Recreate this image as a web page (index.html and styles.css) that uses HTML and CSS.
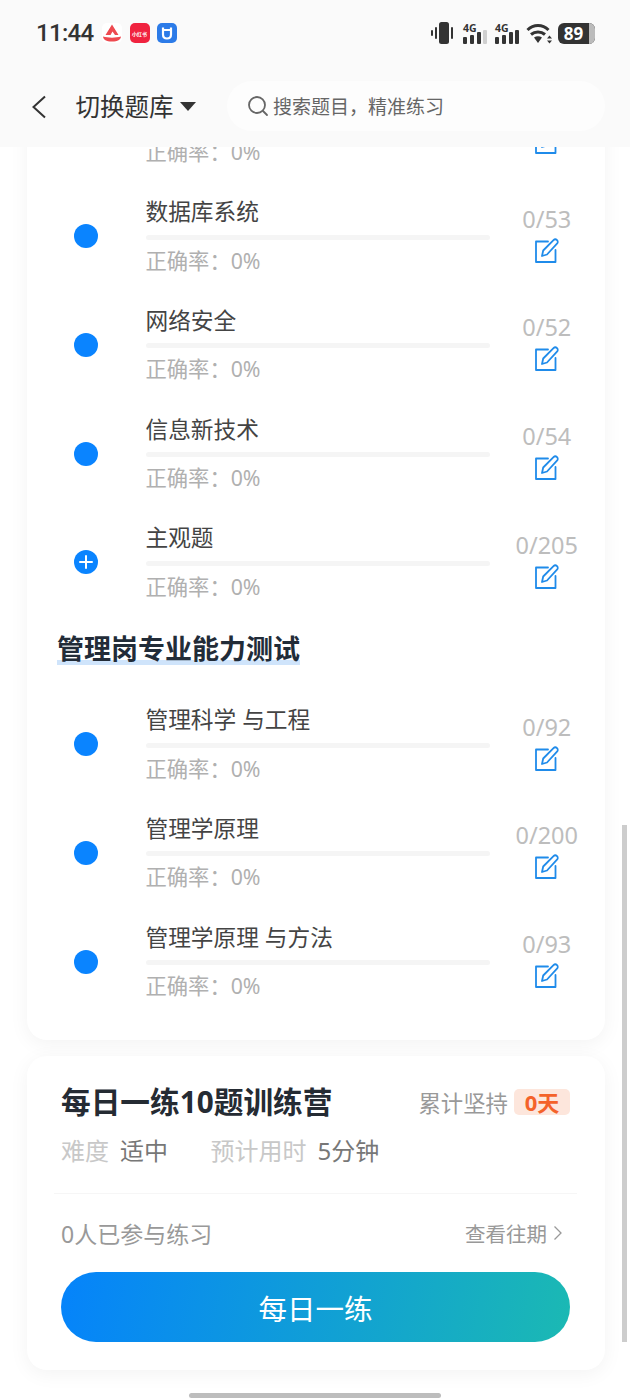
FILE: index.html
```html
<!DOCTYPE html>
<html lang="zh">

<head>
    <meta charset="utf-8">
    <title>切换题库</title>
    <link rel="stylesheet" href="styles.css">
</head>

<body>
    <svg class="defs" width="0" height="0">
        <symbol id="edit" viewBox="0 0 24 25">
            <path d="M13 3.5H1V24H20.500V12" fill="none" stroke="currentColor" stroke-width="1.800" stroke-linejoin="round" stroke-linecap="round"/>
            <path d="M7 18L8.200 12.500L18.500 2.200C19.500 1.200 21 1.200 22 2.200C23 3.200 23 4.700 22 5.700L12 16.500Z" fill="none" stroke="currentColor" stroke-width="1.800" stroke-linejoin="round"/>
        </symbol>
        <symbol id="signal" viewBox="0 0 26 24">
            <rect x="1" y="16" width="4" height="7" rx="1"/>
            <rect x="8" y="14" width="4" height="9" rx="1"/>
            <rect x="15" y="11" width="4" height="12" rx="1"/>
        </symbol>
    </svg>

    <div class="top">
        <div class="status">
            <span class="time">11:44</span>
            <span class="app app-a">
                <svg width="20" height="20" viewBox="0 0 20 20">
                    <path d="M3.500 12L10 1.500L16.500 12H13L10.500 8.500L8.500 12Z" fill="#ee4a50"/>
                    <path d="M1 13.500C6 15 14 15 19 13.500C18.500 17 16 18.500 10 18.500C4 18.500 1.500 17 1 13.500Z" fill="#ee4a50"/>
                </svg>
            </span>
            <span class="app app-red">小红书</span>
            <span class="app app-blue">
                <svg width="20" height="20" viewBox="0 0 20 20">
                    <path d="M6 4.500V11.500C6 14 7.800 15.500 10 15.500C12.200 15.500 14 14 14 11.500V4.500" fill="none" stroke="#fff" stroke-width="2.200"/>
                    <path d="M6 7H14" stroke="#fff" stroke-width="2"/>
                </svg>
            </span>
            <span class="status-right">
                <svg class="vib" width="26" height="22" viewBox="0 0 26 22">
                    <rect x="8" y="0" width="10" height="22" rx="2.500" fill="#333"/>
                    <rect x="4" y="5" width="2" height="12" rx="1" fill="#333"/>
                    <rect x="0" y="8" width="2" height="6" rx="1" fill="#333"/>
                    <rect x="20" y="5" width="2" height="12" rx="1" fill="#333"/>
                </svg>
                <span class="net">
                    <span class="net-label">4G</span>
                    <svg class="bars" width="26" height="24"><use href="#signal"/></svg>
                    <span class="bar-off"></span>
                </span>
                <span class="net">
                    <span class="net-label">4G</span>
                    <svg class="bars" width="26" height="24"><use href="#signal"/></svg>
                    <span class="bar-on"></span>
                </span>
                <svg class="wifi" width="27" height="21" viewBox="0 0 27 21">
                    <path d="M1.500 7C7.500 1 16.500 1 22.500 7" fill="none" stroke="#333" stroke-width="3"/>
                    <path d="M5 11.500C9 8 15 8 19 11.500" fill="none" stroke="#333" stroke-width="3"/>
                    <path d="M8 14.500C10.500 12.800 13.500 12.800 16 14.500L12 20Z" fill="#333"/>
                    <path d="M23.500 12.500L26 15.500H21ZM23.500 20.500L21 17.500H26Z" fill="#333"/>
                </svg>
                <span class="battery"><span class="level">89</span></span>
            </span>
        </div>
        <div class="nav">
            <svg class="back" width="16" height="24" viewBox="0 0 16 24">
                <path d="M14 1.500L2.500 12L14 22.500" fill="none" stroke="#333" stroke-width="2"/>
            </svg>
            <span class="nav-title">切换题库</span>
            <span class="caret"></span>
            <div class="search">
                <svg width="22" height="22" viewBox="0 0 22 22">
                    <circle cx="10" cy="10" r="8" fill="none" stroke="#666" stroke-width="1.800"/>
                    <path d="M16 16L20 20" stroke="#666" stroke-width="1.800" stroke-linecap="round"/>
                </svg>
                <span>搜索题目，精准练习</span>
            </div>
        </div>
    </div>

    <main class="content">
        <section class="card list">
            <div class="row">
                <span class="dot"></span>
                <div class="info">
                    <div class="name">&nbsp;</div>
                    <div class="bar"></div>
                    <div class="rate">正确率：0%</div>
                </div>
                <div class="side">
                    <div class="count">&nbsp;</div>
                    <svg class="edit"><use href="#edit"/></svg>
                </div>
            </div>
            <div class="row">
                <span class="dot"></span>
                <div class="info">
                    <div class="name">数据库系统</div>
                    <div class="bar"></div>
                    <div class="rate">正确率：0%</div>
                </div>
                <div class="side">
                    <div class="count">0/53</div>
                    <svg class="edit"><use href="#edit"/></svg>
                </div>
            </div>
            <div class="row">
                <span class="dot"></span>
                <div class="info">
                    <div class="name">网络安全</div>
                    <div class="bar"></div>
                    <div class="rate">正确率：0%</div>
                </div>
                <div class="side">
                    <div class="count">0/52</div>
                    <svg class="edit"><use href="#edit"/></svg>
                </div>
            </div>
            <div class="row">
                <span class="dot"></span>
                <div class="info">
                    <div class="name">信息新技术</div>
                    <div class="bar"></div>
                    <div class="rate">正确率：0%</div>
                </div>
                <div class="side">
                    <div class="count">0/54</div>
                    <svg class="edit"><use href="#edit"/></svg>
                </div>
            </div>
            <div class="row">
                <span class="dot plus"></span>
                <div class="info">
                    <div class="name">主观题</div>
                    <div class="bar"></div>
                    <div class="rate">正确率：0%</div>
                </div>
                <div class="side">
                    <div class="count">0/205</div>
                    <svg class="edit"><use href="#edit"/></svg>
                </div>
            </div>

            <div class="section"><h2>管理岗专业能力测试</h2></div>

            <div class="row">
                <span class="dot"></span>
                <div class="info">
                    <div class="name">管理科学 与工程</div>
                    <div class="bar"></div>
                    <div class="rate">正确率：0%</div>
                </div>
                <div class="side">
                    <div class="count">0/92</div>
                    <svg class="edit"><use href="#edit"/></svg>
                </div>
            </div>
            <div class="row">
                <span class="dot"></span>
                <div class="info">
                    <div class="name">管理学原理</div>
                    <div class="bar"></div>
                    <div class="rate">正确率：0%</div>
                </div>
                <div class="side">
                    <div class="count">0/200</div>
                    <svg class="edit"><use href="#edit"/></svg>
                </div>
            </div>
            <div class="row">
                <span class="dot"></span>
                <div class="info">
                    <div class="name">管理学原理 与方法</div>
                    <div class="bar"></div>
                    <div class="rate">正确率：0%</div>
                </div>
                <div class="side">
                    <div class="count">0/93</div>
                    <svg class="edit"><use href="#edit"/></svg>
                </div>
            </div>
        </section>

        <section class="card daily">
            <div class="daily-head">
                <h3>每日一练10题训练营</h3>
                <span class="streak">累计坚持</span>
                <span class="days">0天</span>
            </div>
            <div class="meta">
                <span class="meta-key">难度</span>
                <span class="meta-val">适中</span>
                <span class="meta-key meta-gap">预计用时</span>
                <span class="meta-val">5分钟</span>
            </div>
            <div class="daily-foot">
                <span class="joined">0人已参与练习</span>
                <span class="past">查看往期</span>
                <svg width="10" height="16" viewBox="0 0 10 16">
                    <path d="M1.500 1.500L8 8L1.500 14.500" fill="none" stroke="#999" stroke-width="1.300"/>
                </svg>
            </div>
            <button class="go">每日一练</button>
        </section>
    </main>

    <div class="scrollbar"></div>
    <div class="home"></div>
</body>

</html>
```

FILE: styles.css
```css
* { box-sizing: border-box; }
html, body { margin: 0; padding: 0; }
body { position: relative; width: 630px; height: 1400px; overflow: hidden; display: flex; flex-direction: column; background: #fff; font-family: "Noto Sans", "Noto Sans CJK SC", sans-serif; color: #333; }
.defs { position: absolute; }

.top { height: 147px; flex: none; background: #fafafa; position: relative; z-index: 2; }
.status { height: 68px; display: flex; align-items: center; padding: 0 35px 2px 36px; }
.time { font-family: Roboto, sans-serif; font-size: 24px; font-weight: 500; color: #333; width: 66px; letter-spacing: -0.7px; flex: none; }
.app { width: 20px; height: 20px; border-radius: 5px; margin-right: 7.500px; display: flex; align-items: center; justify-content: center; flex: none; overflow: hidden; }
.app-a { background: #fff; }
.app-red { background: #f0233f; color: #fff; font-size: 5px; font-weight: 700; white-space: nowrap; }
.app-blue { background: #2c7be8; }
.status-right { margin-left: auto; display: flex; align-items: center; }
.vib { margin-right: 5px; }
.net { position: relative; width: 26px; height: 24px; margin-right: 6px; display: block; }
.net-label { position: absolute; left: 1px; top: 2px; font-size: 10.500px; line-height: 10px; font-weight: 700; color: #333; }
.bars { position: absolute; left: 0; top: 0; fill: #333; }
.bar-off, .bar-on { position: absolute; left: 21px; top: 9px; width: 4px; height: 14px; border-radius: 1px; background: #d0d0d0; }
.bar-on { background: #333; }
.wifi { margin-right: 5px; }
.battery { width: 37px; height: 21px; background: #333; border-radius: 6px; display: block; position: relative; color: #fff; overflow: hidden; }
.battery::after { content: ""; position: absolute; right: 0; top: 0; width: 6px; height: 21px; background: #bbb; }
.level { display: block; width: 31px; text-align: center; font-size: 17px; line-height: 21px; font-weight: 700; }

.nav { display: flex; align-items: center; height: 50px; margin-top: 14px; padding-left: 31px; }
.back { flex: none; margin-right: 28.500px; }
.nav-title { font-size: 24.500px; line-height: 34px; color: #333; }
.caret { width: 0; height: 0; margin: -2px 0 0 6px; border-left: 8px solid transparent; border-right: 8px solid transparent; border-top: 9px solid #333; }
.search { margin: -2px 0 0 31px; width: 378px; height: 50px; border-radius: 25px; background: #fdfdfd; display: flex; align-items: center; padding-left: 20px; gap: 4.500px; font-size: 19px; color: #666; }

.content { flex: 1; min-height: 0; overflow: hidden; padding: 0 25px 0 27px; }
.card { background: #fff; border-radius: 20px; box-shadow: 0 4px 20px rgba(0, 0, 0, 0.05); }
.list { margin-top: -74px; padding-bottom: 24.500px; }

.row { height: 108.700px; display: flex; align-items: flex-start; }
.dot { width: 24px; height: 24px; border-radius: 50%; background: #0a84ff; flex: none; margin: 42.500px 47.500px 0 47px; position: relative; }
.plus::before, .plus::after { content: ""; position: absolute; background: #fff; border-radius: 1px; }
.plus::before { left: 5px; top: 11px; width: 14px; height: 2px; }
.plus::after { left: 11px; top: 5px; width: 2px; height: 14px; }
.info { width: 344px; padding-top: 16.500px; flex: none; }
.name { font-size: 22.700px; line-height: 28px; color: #444; white-space: nowrap; }
.bar { height: 5px; margin-top: 8.500px; border-radius: 3px; background: #f5f5f5; }
.rate { margin-top: 7px; font-size: 21.300px; line-height: 28px; color: #b0b0b0; }
.side { width: 114.500px; padding-top: 23px; display: flex; flex-direction: column; align-items: center; }
.count { font-size: 23.500px; line-height: 28px; color: #bdbdbd; }
.edit { width: 24px; height: 25px; margin-top: 5px; color: #1f8bea; }

.section { height: 73.300px; padding: 15px 0 0 30px; }
.section h2 { display: inline-block; margin: 0; font-size: 27px; line-height: 36px; font-weight: 700; color: #222c38; background: linear-gradient(#cfe4fb, #cfe4fb) no-repeat left bottom 2px / 100% 5px; }

.daily { margin-top: 16px; height: 314px; padding: 0 35px 0 34px; }
.daily-head { display: flex; align-items: center; height: 44px; padding-top: 24px; box-sizing: content-box; }
.daily-head h3 { margin: 0; font-size: 29.700px; line-height: 44px; font-weight: 700; color: #252b33; white-space: nowrap; }
.streak { margin-left: auto; font-size: 22.400px; color: #999; }
.days { margin-left: 6px; width: 56px; height: 26px; line-height: 26px; border-radius: 5px; background: #fde6dc; text-align: center; font-size: 22px; font-weight: 700; color: #f4622a; }
.meta { display: flex; align-items: center; height: 36px; margin-top: 7px; font-size: 24px; }
.meta-key { color: #c8c8c8; }
.meta-val { margin-left: 11px; color: #777; }
.meta-gap { margin-left: 42.500px; }
.daily-foot { display: flex; align-items: center; height: 79px; margin: 26px -7px 0; padding: 0 14px 0 7px; border-top: 1px solid #f6f6f6; }
.joined { font-size: 23px; color: #999; }
.past { margin-left: auto; font-size: 20.500px; color: #999; margin-right: 6px; }
.go { display: block; width: 509px; height: 70px; margin: 0; border: 0; border-radius: 35px; background: linear-gradient(100deg, #0583fb, #1bb9b3); color: #fff; font-family: inherit; font-size: 28.500px; }

.scrollbar { position: absolute; left: 622px; top: 825px; width: 5px; height: 517px; background: #cdcdcd; }
.home { position: absolute; left: 189px; top: 1393px; width: 252px; height: 5px; border-radius: 3px; background: #bdbdbd; }
```
